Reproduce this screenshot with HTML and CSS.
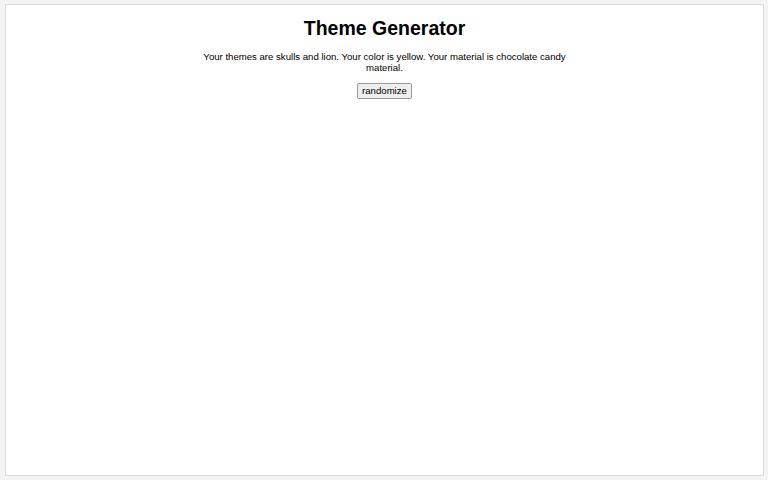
FILE: index.html
```html
<!DOCTYPE html>
<html>
<head>
<meta charset="utf-8">
<link rel="stylesheet" href="styles.css">
</head>
<body>
<div class="frame">
  <h1 class="title">Theme Generator</h1>
  <p class="desc">Your themes are skulls and lion. Your color is yellow. Your material is chocolate candy material.</p>
  <div class="actions"><button class="btn">randomize</button></div>
</div>
</body>
</html>
```
FILE: styles.css
```css
html, body { margin: 0; padding: 0; }
body {
  background: #f3f3f3;
  padding: 4px 4px 4px 5px;
  box-sizing: border-box;
  height: 480px;
  font-family: "Liberation Sans", Arial, sans-serif;
}
.frame {
  background: #fff;
  border: 1px solid #dcdcdc;
  height: 100%;
  box-sizing: border-box;
  padding-top: 12px;
  text-align: center;
  color: #000;
}
.title {
  font-size: 19.5px;
  font-weight: bold;
  margin: 0 0 12px 0;
  line-height: 22px;
}
.desc {
  font-size: 9.6px;
  line-height: 11px;
  width: 372px;
  margin: 0 auto 10px auto;
}
.actions { line-height: 0; }
.btn {
  font-family: "Liberation Sans", Arial, sans-serif;
  font-size: 9.6px;
  padding: 1px 4px 2px 4px;
  line-height: 11px;
  background: #efefef;
  border: 1px solid #9a9a9a;
  border-radius: 2px;
  color: #000;
}
```
